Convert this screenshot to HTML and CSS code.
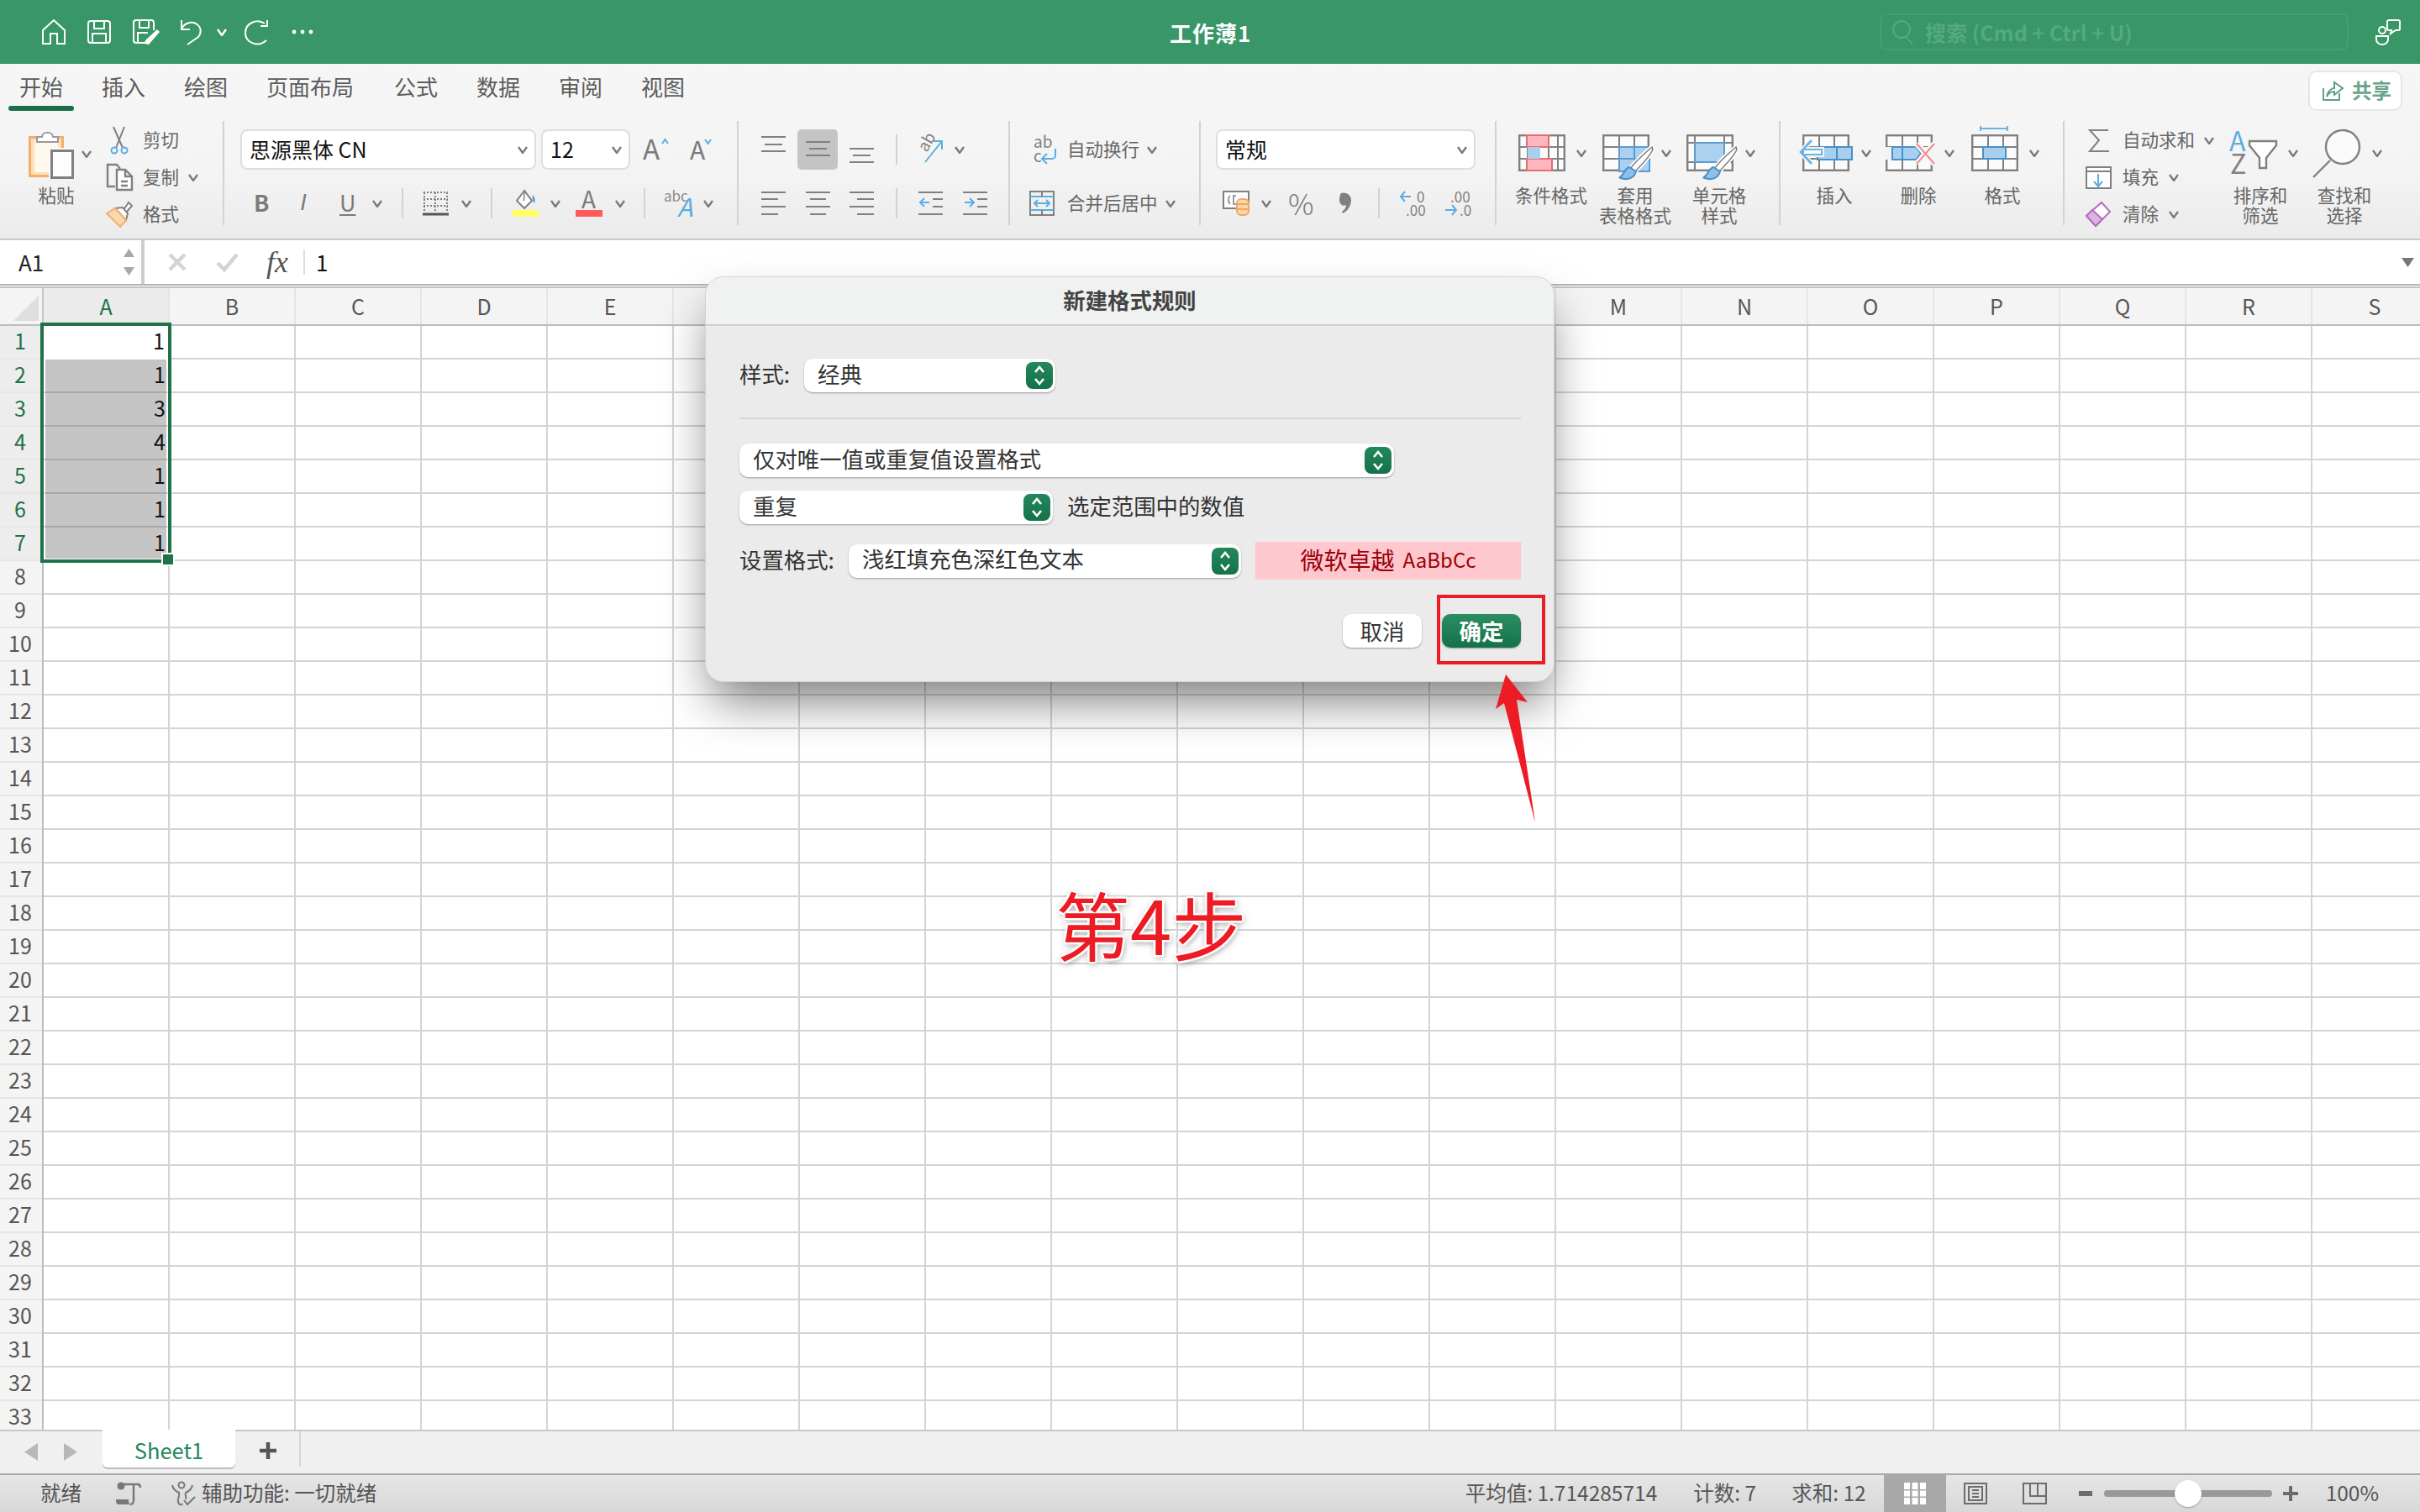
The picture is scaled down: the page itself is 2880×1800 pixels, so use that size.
FILE: index.html
```html
<!DOCTYPE html>
<html lang="zh-CN">
<head>
<meta charset="utf-8">
<title>工作薄1</title>
<link rel="stylesheet" href="styles.css">
</head>
<body>
<svg class="sprite" xmlns="http://www.w3.org/2000/svg">
  <symbol id="chev" viewBox="0 0 12 9"><polyline points="1,1 6,8 11,1" fill="none" stroke="currentColor" stroke-width="2.4"/></symbol>
  <symbol id="grid" viewBox="0 0 56 44"><rect x="1.2" y="1.2" width="53.6" height="41.6" fill="#fbfbfb" stroke="#808080" stroke-width="2.4"/><path d="M20 1V43M38 1V43M1 15H55M1 29H55" stroke="#808080" stroke-width="2" fill="none"/></symbol>
  <symbol id="step" viewBox="0 0 32 32"><path d="M11 12 16 6l5 6M11 20l5 6 5-6" fill="none" stroke="#fff" stroke-width="2.6"/></symbol>
  <symbol id="brush" viewBox="0 0 62 55"><path d="M59 15C52 21 38 34 33 41l5 4c6-6 18-18 22-27Z" fill="#fff" stroke="#fff" stroke-width="5"/><path d="M59 15C52 21 38 34 33 41l5 4c6-6 18-18 22-27Z" fill="#fff" stroke="#808080" stroke-width="1.600"/><path d="M32 39c-6 2-6 8-10 11-2 1-2 2 0 2 8 3 16 0 18-8Z" fill="#8cc0e8" stroke="#4a90c8" stroke-width="2"/></symbol>
</svg>

<header class="titlebar">
  <svg class="ic-home" viewBox="0 0 28 30"><path d="M1 13 14 1l13 12v16h-9V17h-8v12H1Z" fill="none" stroke="#fff" stroke-width="2"/></svg>
  <svg class="ic-save" viewBox="0 0 28 28"><path d="M4 1h20a3 3 0 0 1 3 3v20a3 3 0 0 1-3 3H4a3 3 0 0 1-3-3V4a3 3 0 0 1 3-3ZM8 1v9h12V1M6 27V16h16v11" fill="none" stroke="#fff" stroke-width="2"/></svg>
  <svg class="ic-saveas" viewBox="0 0 32 30"><path d="M18 28H4a3 3 0 0 1-3-3V4a3 3 0 0 1 3-3h18a3 3 0 0 1 3 3v9M8 1v9h11V1M6 28V16h12" fill="none" stroke="#fff" stroke-width="2"/><path d="M29 12 32 15 19 30 14 29 15 25Z" fill="#fff"/></svg>
  <svg class="ic-undo" viewBox="0 0 26 31"><path d="M2 1v11h10M2 12C4 5 13 2 19 5c7 4 7 11 3 16L9 30" fill="none" stroke="#fff" stroke-width="2"/></svg>
  <svg class="chev chev-t"><use href="#chev"/></svg>
  <svg class="ic-redo" viewBox="0 0 33 31"><path d="M25 5C16-1 2 4 2 16c0 12 15 18 25 9M20 8h8V1" fill="none" stroke="#fff" stroke-width="2"/></svg>
  <svg class="ic-more" viewBox="0 0 26 6"><circle cx="3" cy="3" r="2.400" fill="#fff"/><circle cx="13" cy="3" r="2.400" fill="#fff"/><circle cx="23" cy="3" r="2.400" fill="#fff"/></svg>
  <div class="doc-title">工作薄1</div>
  <div class="search">
    <svg class="ic-search" viewBox="0 0 26 30"><circle cx="12" cy="12" r="10" fill="none" stroke="currentColor" stroke-width="2"/><path d="M18 21l7 9" stroke="currentColor" stroke-width="2"/></svg>
    <span>搜索 (Cmd + Ctrl + U)</span>
  </div>
  <svg class="ic-person" viewBox="0 0 31 31"><circle cx="9" cy="13" r="4" fill="none" stroke="#fff" stroke-width="2"/><path d="M2 20h14v4a7 6 0 0 1-14 0Z" fill="none" stroke="#fff" stroke-width="2"/><path d="M17 1h11a2 2 0 0 1 2 2v8a2 2 0 0 1-2 2h-3l-6 4 1-4h-3a2 2 0 0 1-2-2V3a2 2 0 0 1 2-2Z" fill="none" stroke="#fff" stroke-width="2"/></svg>
</header>

<section class="ribbon">
  <nav class="tabs">
    <span class="tab active">开始</span>
    <span class="tab">插入</span>
    <span class="tab">绘图</span>
    <span class="tab">页面布局</span>
    <span class="tab ml2">公式</span>
    <span class="tab">数据</span>
    <span class="tab">审阅</span>
    <span class="tab">视图</span>
    <button class="share">
      <svg class="ic-share" viewBox="0 0 24 24"><path d="M1 9v14h19v-8" fill="none" stroke="#5f9f82" stroke-width="2"/><path d="M5 19c1-7 6-10 9-10V2l10 7-10 8v-4c-4 0-7 2-9 6Z" fill="none" stroke="#5f9f82" stroke-width="2"/></svg>
      <span>共享</span>
    </button>
  </nav>
  <div class="groups">
    <div class="group g1">
      <div class="paste">
        <div class="paste-top">
          <svg class="ic-paste" viewBox="0 0 54 59"><rect x="1.500" y="9.500" width="39" height="46" fill="#fde0b8" stroke="#f4ae6c" stroke-width="3"/><rect x="7" y="14" width="28" height="37" fill="#fff8ec"/><path d="M10 15V9h6c0-7 13-7 13 0h6v6Z" fill="#fff" stroke="#9a9a9a" stroke-width="2"/><rect x="24" y="22" width="30" height="37" fill="#fbfbfb"/><rect x="27.500" y="25.500" width="25" height="32" fill="#fdfdfd" stroke="#808080" stroke-width="3"/></svg>
          <svg class="chev ml9"><use href="#chev"/></svg>
        </div>
        <div class="paste-label">粘贴</div>
      </div>
      <div class="list ml17">
        <div class="list-row">
          <span class="list-ic"><svg class="ic-cut" viewBox="0 0 27 32"><path d="M9 0l11 25M22 0 12 25" stroke="#808080" stroke-width="2" fill="none"/><circle cx="10" cy="28" r="3.500" fill="none" stroke="#5aaee0" stroke-width="2"/><circle cx="22" cy="28" r="3.500" fill="none" stroke="#5aaee0" stroke-width="2"/></svg></span>
          <span>剪切</span>
        </div>
        <div class="list-row">
          <span class="list-ic"><svg class="ic-copy" viewBox="0 0 32 32"><path d="M11 27H2V1h11l4 5" fill="none" stroke="#808080" stroke-width="2.400"/><path d="M13 7h10l8 8v16H13ZM23 7v8h8M18 21h8M18 26h8" fill="#fff" stroke="#808080" stroke-width="2.400"/></svg></span>
          <span>复制</span>
          <svg class="chev ml11"><use href="#chev"/></svg>
        </div>
        <div class="list-row">
          <span class="list-ic"><svg class="ic-fmt" viewBox="0 0 32 30"><path d="M21 10 27 1l4 4-7 8" fill="#fff" stroke="#808080" stroke-width="2"/><path d="M11 8 20 7l6 7-2 8Z" fill="#fff" stroke="#808080" stroke-width="2"/><path d="M1 14 11 8l13 14-7 8Z" fill="#fbd7ae" stroke="#f4ae6c" stroke-width="2"/></svg></span>
          <span>格式</span>
        </div>
      </div>
    </div>

    <div class="group g2">
      <div class="r1">
        <div class="field w352"><span>思源黑体 CN</span><svg class="chev"><use href="#chev"/></svg></div>
        <div class="field w106 ml6"><span>12</span><svg class="chev"><use href="#chev"/></svg></div>
        <svg class="ic-grow ml15" viewBox="0 0 31 30"><text x="0" y="27" class="t-a">A</text><path d="M23 8l3.500-5L30 8" fill="none" stroke="#5aaee0" stroke-width="2"/></svg>
        <svg class="ic-shrink ml25" viewBox="0 0 27 30"><text x="0" y="27" class="t-a2">A</text><path d="M18 3l3.500 5L25 3" fill="none" stroke="#5aaee0" stroke-width="2"/></svg>
      </div>
      <div class="r2">
        <span class="fb b ml16">B</span>
        <span class="fb i ml35">I</span>
        <span class="fb u ml35">U</span>
        <svg class="chev ml22"><use href="#chev"/></svg>
        <i class="sep ml23"></i>
        <svg class="ic-border ml23" viewBox="0 0 31 30"><path d="M1 2h29M1 10h29M1 18h29M2 2v22M15 2v22M29 2v22" stroke="#808080" stroke-width="2" stroke-dasharray="2 2" fill="none"/><path d="M0 28h31" stroke="#555" stroke-width="3"/></svg>
        <svg class="chev ml15"><use href="#chev"/></svg>
        <i class="sep ml23"></i>
        <svg class="ic-fill ml24" viewBox="0 0 31 32"><path d="M14 1 5 13l9 9 9-9Z" fill="#fff" stroke="#808080" stroke-width="2"/><path d="M14 2c0 5 0 9-1 11" stroke="#808080" stroke-width="1.500" fill="none"/><path d="M24 6c3 3 3 7 2 10-2-2-3-6-2-10Z" fill="#4f9ed2"/><rect y="24" width="31" height="8" fill="#ffff66"/></svg>
        <svg class="chev ml14"><use href="#chev"/></svg>
        <svg class="ic-color ml18" viewBox="0 0 32 32"><text x="7" y="22" class="t-color">A</text><rect y="24" width="32" height="8" fill="#ff5a5a"/></svg>
        <svg class="chev ml15"><use href="#chev"/></svg>
        <i class="sep ml22"></i>
        <svg class="ic-phon ml22" viewBox="0 0 35 32"><text x="0" y="14" class="t-abc">abc</text><text x="16" y="32" class="t-ablue">A</text></svg>
        <svg class="chev ml12"><use href="#chev"/></svg>
      </div>
    </div>

    <div class="group g3">
      <div class="r1">
        <svg class="ic-al" viewBox="0 0 29 48"><path d="M0 9h29M4 18h21M0 26h29" stroke="#808080" stroke-width="2.200"/></svg>
        <span class="al-on ml14"><svg class="ic-al" viewBox="0 0 29 48"><path d="M0 15h29M4 23h21M0 31h29" stroke="#808080" stroke-width="2.200"/></svg></span>
        <svg class="ic-al ml14" viewBox="0 0 29 48"><path d="M0 23h29M4 31h21M0 39h29" stroke="#808080" stroke-width="2.200"/></svg>
        <i class="sep ml26"></i>
        <svg class="ic-orient ml23" viewBox="0 0 32 30"><text transform="translate(12 19) rotate(-60)" class="t-ab">ab</text><path d="M10 30 30 5M20 5h10v10" fill="none" stroke="#5aaee0" stroke-width="2"/></svg>
        <svg class="chev ml13"><use href="#chev"/></svg>
      </div>
      <div class="r2">
        <svg class="ic-hal" viewBox="0 0 29 36"><path d="M0 5h29M0 13h20M0 22h29M0 31h20" stroke="#808080" stroke-width="2.200"/></svg>
        <svg class="ic-hal ml24" viewBox="0 0 29 36"><path d="M0 5h29M5 13h19M0 22h29M5 31h19" stroke="#808080" stroke-width="2.200"/></svg>
        <svg class="ic-hal ml23" viewBox="0 0 29 36"><path d="M0 5h29M9 13h20M0 22h29M9 31h20" stroke="#808080" stroke-width="2.200"/></svg>
        <i class="sep ml26"></i>
        <svg class="ic-hal ml25" viewBox="0 0 29 36"><path d="M0 5h29M17 13h12M17 22h12M0 31h29" stroke="#808080" stroke-width="2.200" fill="none"/><path d="M13 17H2M7 12l-5 5 5 5" stroke="#5aaee0" stroke-width="2" fill="none"/></svg>
        <svg class="ic-hal ml24" viewBox="0 0 29 36"><path d="M0 5h29M17 13h12M17 22h12M0 31h29" stroke="#808080" stroke-width="2.200" fill="none"/><path d="M2 17h11M8 12l5 5-5 5" stroke="#5aaee0" stroke-width="2" fill="none"/></svg>
      </div>
    </div>

    <div class="group g4">
      <div class="r1">
        <svg class="ic-wrap ml5" viewBox="0 0 27 30"><text x="0" y="13" class="t-ab2">ab</text><text x="0" y="30" class="t-ab2">c</text><path d="M26 14v8a4 4 0 0 1-4 4H11M16 20l-6 6 6 6" fill="none" stroke="#5aaee0" stroke-width="2"/></svg>
        <span class="ml13">自动换行</span>
        <svg class="chev ml9"><use href="#chev"/></svg>
      </div>
      <div class="r2">
        <svg class="ic-merge" viewBox="0 0 30 30"><rect x="1" y="1" width="28" height="28" fill="none" stroke="#808080" stroke-width="2"/><path d="M1 7h28M1 23h28" stroke="#5aaee0" stroke-width="2"/><path d="M15 1v6M15 23v6" stroke="#808080" stroke-width="2"/><path d="M6 15h18M10 11l-4 4 4 4M20 11l4 4-4 4" fill="none" stroke="#5aaee0" stroke-width="2"/></svg>
        <span class="ml15">合并后居中</span>
        <svg class="chev ml9"><use href="#chev"/></svg>
      </div>
    </div>

    <div class="group g5">
      <div class="r1">
        <div class="field w309"><span>常规</span><svg class="chev"><use href="#chev"/></svg></div>
      </div>
      <div class="r2">
        <svg class="ic-acc ml8" viewBox="0 0 32 30"><rect x="1" y="1" width="30" height="20" fill="#fff" stroke="#808080" stroke-width="2"/><path d="M9 6c-3 3-3 7 0 10M16 6h-3v10h3" fill="none" stroke="#808080" stroke-width="1.600"/><rect x="17" y="10" width="14" height="19" rx="5" fill="#fbd7ae" stroke="#f2a55d" stroke-width="2"/><path d="M17 16h14M17 22h14" stroke="#f2a55d" stroke-width="2"/></svg>
        <svg class="chev ml14"><use href="#chev"/></svg>
        <span class="pct ml20">%</span>
        <svg class="ic-comma ml32" viewBox="0 0 15 26"><path d="M3 1C9-1 15 3 15 9c0 7-4 13-10 16l-1-2c3-2 5-5 5-8-3 2-8 0-8-6 0-3 1-7 2-8Z" fill="#808080"/></svg>
        <i class="sep ml32"></i>
        <svg class="ic-dec ml23" viewBox="0 0 31 32"><path d="M14 8H2M7 2 2 8l5 6" fill="none" stroke="#5aaee0" stroke-width="2"/><text x="21" y="15" class="t-dec">0</text><text x="8" y="31" class="t-dec">.00</text></svg>
        <svg class="ic-dec ml22" viewBox="0 0 31 32"><text x="8" y="15" class="t-dec">.00</text><path d="M2 24h13M10 18l5 6-5 6" fill="none" stroke="#5aaee0" stroke-width="2"/><text x="19" y="31" class="t-dec">.0</text></svg>
      </div>
    </div>

    <div class="group g6">
      <div class="tool">
        <div class="tool-top pad11">
          <svg class="ic-grid" viewBox="0 0 56 44"><rect x="1.200" y="1.200" width="53.600" height="41.600" fill="#fbfbfb" stroke="#808080" stroke-width="2.400"/><path d="M11 1V43M36 1V43M47 1V43M1 15H55M1 29H55" stroke="#808080" stroke-width="2" fill="none"/><rect x="10" y="1" width="26" height="14" fill="#ffb6bf" stroke="#e56d6d" stroke-width="2"/><rect x="10" y="29" width="30" height="14" fill="#ffb6bf" stroke="#e56d6d" stroke-width="2"/><rect x="11" y="15" width="15" height="14" fill="#a8d0ee"/></svg>
          <svg class="chev ch-tool ml13"><use href="#chev"/></svg>
        </div>
        <div class="tool-label">条件格式</div>
      </div>
      <div class="tool">
        <div class="tool-top pad11">
          <svg class="ic-gridb" viewBox="0 0 57 53"><use href="#grid" width="56" height="44"/><rect x="20" y="15" width="36" height="29" fill="#abd1ef" stroke="#5b9bd5" stroke-width="2"/><path d="M38 15v29M20 29h36" stroke="#5b9bd5" stroke-width="2"/><use href="#brush" width="62" height="55"/></svg>
          <svg class="chev ch-tool ml13"><use href="#chev"/></svg>
        </div>
        <div class="tool-label">套用<br>表格格式</div>
      </div>
      <div class="tool">
        <div class="tool-top pad11">
          <svg class="ic-gridb" viewBox="0 0 57 53"><rect x="1.200" y="1.200" width="53.600" height="41.600" fill="#fbfbfb" stroke="#808080" stroke-width="2.400"/><path d="M10 1V43M1 10H55M1 33H55M45 1V43" stroke="#808080" stroke-width="2" fill="none"/><rect x="10" y="10" width="35" height="23" fill="#abd1ef" stroke="#5b9bd5" stroke-width="2"/><use href="#brush" width="62" height="55"/></svg>
          <svg class="chev ch-tool ml13"><use href="#chev"/></svg>
        </div>
        <div class="tool-label">单元格<br>样式</div>
      </div>
    </div>

    <div class="group g7">
      <div class="tool">
        <div class="tool-top pad8">
          <svg class="ic-ins" viewBox="0 0 64 44"><use href="#grid" x="4" width="56" height="44"/><rect x="22" y="15" width="41" height="15" fill="#a8d0ee" stroke="#4a90c8" stroke-width="2"/><path d="M45 15v15" stroke="#4a90c8" stroke-width="2"/><path d="M15 7 2 21l13 14M5 18h22v6H5Z" fill="none" stroke="#f4f4f4" stroke-width="6"/><rect x="5" y="18" width="22" height="6" fill="#fff" stroke="#6ab3e2" stroke-width="2"/><path d="M15 7 2 21l13 14" fill="none" stroke="#6ab3e2" stroke-width="2.600"/></svg>
          <svg class="chev ch-tool ml10"><use href="#chev"/></svg>
        </div>
        <div class="tool-label">插入</div>
      </div>
      <div class="tool">
        <div class="tool-top pad11">
          <svg class="ic-del" viewBox="0 0 60 44"><use href="#grid" width="56" height="44"/><path d="M0 15h8v15H0ZM42 15h14v15H42Z" fill="#f3f3f3"/><path d="M8 15h28l6 7.500-6 7.500H8ZM20 15v15" fill="#a8d0ee" stroke="#4a90c8" stroke-width="2"/><path d="M37 11l21 24M58 11 37 35" stroke="#f6f6f6" stroke-width="7"/><path d="M37 11l21 24M58 11 37 35" stroke="#f08a8a" stroke-width="2"/></svg>
          <svg class="chev ch-tool ml10"><use href="#chev"/></svg>
        </div>
        <div class="tool-label">删除</div>
      </div>
      <div class="tool">
        <div class="tool-top pad13">
          <svg class="ic-fmtc" viewBox="0 0 56 54"><path d="M11 3h32M11 0v6M43 0v6" stroke="#6ab3e2" stroke-width="2" fill="none"/><use href="#grid" y="10" width="56" height="44"/><rect x="14" y="25" width="27" height="14" fill="#a8d0ee" stroke="#4a90c8" stroke-width="2"/></svg>
          <svg class="chev ch-tool ml13"><use href="#chev"/></svg>
        </div>
        <div class="tool-label">格式</div>
      </div>
    </div>

    <div class="group g8">
      <div class="list list-edit">
        <div class="list-row">
          <span class="list-ic"><svg class="ic-sum" viewBox="0 0 25 27"><path d="M24 1H2l11 12L2 26h23" fill="none" stroke="#808080" stroke-width="2"/></svg></span>
          <span>自动求和</span>
          <svg class="chev ml11"><use href="#chev"/></svg>
        </div>
        <div class="list-row">
          <span class="list-ic"><svg class="ic-dn" viewBox="0 0 31 27"><rect x="1" y="1" width="29" height="25" fill="#fff" stroke="#808080" stroke-width="2"/><path d="M1 6h29" stroke="#808080" stroke-width="2"/><path d="M15 9v14M10 18l5 6 5-6" fill="none" stroke="#5aaee0" stroke-width="2"/></svg></span>
          <span>填充</span>
          <svg class="chev ml12"><use href="#chev"/></svg>
        </div>
        <div class="list-row">
          <span class="list-ic"><svg class="ic-clear" viewBox="0 0 30 30"><path d="M19 1 29 12 12 29 1 17Z" fill="#fff" stroke="#b56cc4" stroke-width="2"/><path d="M8 10 20 21 12 29 1 17Z" fill="#dcb3e3" stroke="#b56cc4" stroke-width="2"/></svg></span>
          <span>清除</span>
          <svg class="chev ml12"><use href="#chev"/></svg>
        </div>
      </div>
      <div class="tool">
        <div class="tool-top pad14">
          <svg class="ic-sort" viewBox="0 0 56 52"><text x="-1" y="24" class="t-sa">A</text><text x="0" y="51" class="t-sz">Z</text><path d="M23 12h32v5L43 32v12h-8V32L23 17Z" fill="#fff" stroke="#808080" stroke-width="2.400"/></svg>
          <svg class="chev ch-tool ml13"><use href="#chev"/></svg>
        </div>
        <div class="tool-label">排序和<br>筛选</div>
      </div>
      <div class="tool">
        <div class="tool-top pad12">
          <svg class="ic-find" viewBox="0 0 57 58"><circle cx="36" cy="21" r="20" fill="#fbfbfb" stroke="#808080" stroke-width="2.400"/><path d="M21 37 1 57" stroke="#808080" stroke-width="2.400"/></svg>
          <svg class="chev ch-tool ml14"><use href="#chev"/></svg>
        </div>
        <div class="tool-label">查找和<br>选择</div>
      </div>
    </div>
  </div>
</section>

<section class="formula">
  <div class="namebox">
    <span>A1</span>
    <svg class="ic-spin" viewBox="0 0 13 32"><path d="M6.500 0 13 10H0ZM6.500 32 0 22h13Z" fill="#a8a8a8"/></svg>
  </div>
  <svg class="ic-x" viewBox="0 0 22 22"><path d="M2 2l18 18M20 2 2 20" stroke="#d4d4d4" stroke-width="4.500"/></svg>
  <svg class="ic-ok" viewBox="0 0 26 22"><path d="M2 12l8 8L25 2" fill="none" stroke="#d4d4d4" stroke-width="4.500"/></svg>
  <span class="fx"><i>f</i><i>x</i></span>
  <i class="fsep"></i>
  <span class="fval">1</span>
  <svg class="ic-fdown" viewBox="0 0 15 11"><path d="M0 0h15L7.500 11Z" fill="#777"/></svg>
</section>

<main class="sheet">
  <div class="colheads">
    <div class="corner"><svg class="ic-corner" viewBox="0 0 30 30"><path d="M30 0V30H0Z" fill="#dedede"/></svg></div>
    <span class="ch on">A</span><span class="ch">B</span><span class="ch">C</span><span class="ch">D</span><span class="ch">E</span><span class="ch"></span><span class="ch"></span><span class="ch"></span><span class="ch"></span><span class="ch"></span><span class="ch"></span><span class="ch"></span><span class="ch">M</span><span class="ch">N</span><span class="ch">O</span><span class="ch">P</span><span class="ch">Q</span><span class="ch">R</span><span class="ch">S</span>
  </div>
  <div class="sheet-body">
    <div class="rowheads">
      <span class="rh on">1</span><span class="rh on">2</span><span class="rh on">3</span><span class="rh on">4</span><span class="rh on">5</span><span class="rh on">6</span><span class="rh on">7</span><span class="rh">8</span><span class="rh">9</span><span class="rh">10</span><span class="rh">11</span><span class="rh">12</span><span class="rh">13</span><span class="rh">14</span><span class="rh">15</span><span class="rh">16</span><span class="rh">17</span><span class="rh">18</span><span class="rh">19</span><span class="rh">20</span><span class="rh">21</span><span class="rh">22</span><span class="rh">23</span><span class="rh">24</span><span class="rh">25</span><span class="rh">26</span><span class="rh">27</span><span class="rh">28</span><span class="rh">29</span><span class="rh">30</span><span class="rh">31</span><span class="rh">32</span><span class="rh">33</span>
    </div>
    <div class="cells">
      <div class="col-a">
        <div class="cell">1</div>
        <div class="cell dup">1</div>
        <div class="cell dup">3</div>
        <div class="cell dup">4</div>
        <div class="cell dup">1</div>
        <div class="cell dup">1</div>
        <div class="cell dup last">1</div>
      </div>
    </div>
  </div>
  <div class="selection"><i class="handle"></i></div>
</main>

<section class="tabstrip">
  <svg class="ic-tri" viewBox="0 0 16 21"><path d="M16 0V21L0 10.500Z" fill="#b8b8b8"/></svg>
  <svg class="ic-tri ml31" viewBox="0 0 16 21"><path d="M0 0V21L16 10.500Z" fill="#b8b8b8"/></svg>
  <div class="sheet-tab">Sheet1</div>
  <svg class="ic-plus" viewBox="0 0 20 20"><path d="M10 0v20M0 10h20" stroke="#555" stroke-width="4.500"/></svg>
  <i class="tsep"></i>
</section>

<footer class="status">
  <span class="pl48">就绪</span>
  <svg class="ic-macro ml41" viewBox="0 0 32 28"><circle cx="6" cy="5" r="4.500" fill="#777"/><path d="M6 3h20c2 0 3 2 3 4M21 3v19c0 3-2 5-4 5" fill="none" stroke="#777" stroke-width="2.400"/><path d="M0 21h15v2c0 2 1 3 2 4H3c-2 0-3-2-3-4Z" fill="#777"/></svg>
  <svg class="ic-access ml33" viewBox="0 0 30 30"><circle cx="13" cy="5" r="3.500" fill="none" stroke="#777" stroke-width="2"/><path d="M2 5c1 6 6 8 8 9 1 5-2 7-1 11 1 4 4 4 5 2M26 5c-1 6-6 8-8 9-1 3 1 5 0 8M16 23l4 5 9-9" fill="none" stroke="#777" stroke-width="2"/></svg>
  <span class="ml7">辅助功能: 一切就绪</span>
  <span class="stat-first">平均值: 1.714285714</span>
  <span class="ml43">计数: 7</span>
  <span class="ml42">求和: 12</span>
  <div class="view-on ml21"><svg class="ic-view" viewBox="0 0 26 26"><path d="M0 0h7v8H0ZM9.500 0h7v8h-7ZM19 0h7v8h-7ZM0 9.500h7v7H0ZM9.500 9.500h7v7h-7ZM19 9.500h7v7h-7ZM0 18h7v8H0ZM9.500 18h7v8h-7ZM19 18h7v8h-7Z" fill="#fff"/></svg></div>
  <svg class="ic-layout ml21" viewBox="0 0 28 26"><rect x="1" y="1" width="26" height="24" fill="none" stroke="#6d6d6d" stroke-width="2"/><rect x="6" y="5" width="16" height="16" fill="none" stroke="#6d6d6d" stroke-width="2"/><path d="M10 9h8M10 13h8M10 17h8" stroke="#6d6d6d" stroke-width="2"/></svg>
  <svg class="ic-break ml42" viewBox="0 0 29 26"><rect x="1" y="1" width="27" height="24" fill="none" stroke="#6d6d6d" stroke-width="2"/><path d="M9 1v15h19M18 1v15" fill="none" stroke="#6d6d6d" stroke-width="2"/></svg>
  <i class="zoom-minus ml38"></i>
  <div class="slider ml14"><i class="thumb"></i></div>
  <svg class="ic-zplus ml13" viewBox="0 0 18 18"><path d="M9 0v18M0 9h18" stroke="#6d6d6d" stroke-width="4"/></svg>
  <span class="ml33">100%</span>
</footer>

<div class="dialog">
  <div class="dialog-title">新建格式规则</div>
  <div class="dialog-body">
    <div class="d-row">
      <span class="lbl w77">样式:</span>
      <div class="select w299"><span class="opt">经典</span><span class="stepper"><svg class="step"><use href="#step"/></svg></span></div>
    </div>
    <hr class="d-rule">
    <div class="d-row">
      <div class="select w779"><span class="opt">仅对唯一值或重复值设置格式</span><span class="stepper"><svg class="step"><use href="#step"/></svg></span></div>
    </div>
    <div class="d-row mt16">
      <div class="select w373"><span class="opt">重复</span><span class="stepper"><svg class="step"><use href="#step"/></svg></span></div>
      <span class="lbl ml17">选定范围中的数值</span>
    </div>
    <div class="d-row d-row-tall mt21">
      <span class="lbl w130">设置格式:</span>
      <div class="select w467"><span class="opt">浅红填充色深红色文本</span><span class="stepper"><svg class="step"><use href="#step"/></svg></span></div>
      <div class="preview"><span class="pv-zh">微软卓越</span><span class="pv-en">AaBbCc</span></div>
    </div>
    <div class="d-actions">
      <button class="btn">取消</button>
      <button class="btn primary">确定</button>
    </div>
  </div>
</div>

<div class="callout-box"></div>
<svg class="callout-arrow" viewBox="0 0 55 180"><polygon points="17,3 43,36 30,33 52,179 15,37 5,44" fill="#ed1c24"/></svg>
<div class="callout-text">第4步</div>
</body>
</html>
```

FILE: styles.css
```css
* { box-sizing: border-box; }
html, body { margin: 0; padding: 0; }
body {
  width: 2880px;
  height: 1800px;
  overflow: hidden;
  position: relative;
  display: flex;
  flex-direction: column;
  background: #fff;
  font-family: "Noto Sans CJK SC", "Noto Sans", sans-serif;
  font-size: 26px;
  color: #333;
}
i { font-style: normal; display: block; }
svg { display: block; flex: none; overflow: visible; }
.sprite { display: none; }

.ml2 { margin-left: 2px; } .ml5 { margin-left: 5px; } .ml6 { margin-left: 6px; } .ml7 { margin-left: 7px; }
.ml8 { margin-left: 8px; } .ml9 { margin-left: 9px; } .ml10 { margin-left: 10px; } .ml11 { margin-left: 11px; }
.ml12 { margin-left: 12px; } .ml13 { margin-left: 13px; } .ml14 { margin-left: 14px; } .ml15 { margin-left: 15px; }
.ml16 { margin-left: 16px; } .ml17 { margin-left: 17px; } .ml18 { margin-left: 18px; } .ml20 { margin-left: 20px; }
.ml21 { margin-left: 21px; } .ml22 { margin-left: 22px; } .ml23 { margin-left: 23px; } .ml24 { margin-left: 24px; }
.ml25 { margin-left: 25px; } .ml26 { margin-left: 26px; } .ml31 { margin-left: 31px; } .ml32 { margin-left: 32px; }
.ml33 { margin-left: 33px; } .ml35 { margin-left: 35px; } .ml38 { margin-left: 38px; } .ml41 { margin-left: 41px; }
.ml42 { margin-left: 42px; } .ml43 { margin-left: 43px; }
.mt16 { margin-top: 16px; } .mt21 { margin-top: 21px; }
.pad8 { padding-left: 8px; } .pad11 { padding-left: 11px; } .pad12 { padding-left: 12px; } .pad13 { padding-left: 13px; } .pad14 { padding-left: 14px; }

.chev { width: 12px; height: 9px; color: #7a7a7a; }

/* title bar */
.titlebar {
  height: 76px;
  flex: none;
  display: flex;
  align-items: center;
  padding-left: 50px;
  padding-right: 23px;
  background: #389667;
  color: #fff;
}
.ic-home { width: 28px; height: 30px; }
.ic-save { width: 28px; height: 28px; margin-left: 26px; }
.ic-saveas { width: 32px; height: 30px; margin-left: 26px; }
.ic-undo { width: 26px; height: 31px; margin-left: 24px; }
.chev-t { color: #fff; margin-left: 18px; }
.ic-redo { width: 33px; height: 31px; margin-left: 20px; }
.ic-more { width: 26px; height: 6px; margin-left: 24px; }
.doc-title { margin-left: 1019px; font-weight: 700; font-size: 26px; letter-spacing: 1px; }
.search {
  margin-left: auto;
  width: 558px;
  height: 44px;
  border: 2px solid #419f72;
  border-radius: 8px;
  display: flex;
  align-items: center;
  padding-left: 12px;
  color: #54a982;
  font-weight: 700;
  font-size: 25px;
}
.ic-search { width: 26px; height: 30px; margin-right: 14px; }
.ic-person { width: 31px; height: 31px; margin-left: 31px; }

/* ribbon */
.ribbon {
  height: 210px;
  flex: none;
  background: linear-gradient(#f6f6f6, #f4f4f4 60%, #ebebeb);
  border-bottom: 2px solid #c8c8c8;
  color: #666;
  font-size: 21.500px;
}
.tabs {
  height: 68px;
  display: flex;
  gap: 46px;
  padding: 8px 21px 0 23px;
  font-size: 26px;
  color: #5c5c5c;
}
.tab { position: relative; height: 34px; line-height: 30px; margin-top: 4px; }
.tab.ml2 { margin-left: 2px; }
.tab.active::after {
  content: "";
  position: absolute;
  left: -13px;
  right: -13px;
  top: 38px;
  height: 6px;
  border-radius: 3px;
  background: #1d6f4a;
}
.share {
  margin-left: auto;
  width: 112px;
  height: 48px;
  display: flex;
  align-items: center;
  padding: 0 0 0 15px;
  background: #fff;
  border: 2px solid #e6e6e6;
  border-radius: 10px;
  font-family: inherit;
  font-size: 23.500px;
  font-weight: 700;
  color: #6aa58a;
}
.share span { padding-bottom: 3px; }
.ic-share { width: 24px; height: 24px; margin-right: 11px; }

.groups { display: flex; height: 124px; }
.group { height: 124px; border-right: 2px solid #d2d2d2; flex: none; }
.g1 { width: 267px; padding-left: 34px; display: flex; }
.g2 { width: 612px; padding-left: 19px; }
.g3 { width: 323px; padding-left: 27px; }
.g4 { width: 227px; padding-left: 23px; }
.g5 { width: 352px; padding-left: 18px; }
.g6 { width: 338px; padding-left: 15px; display: flex; }
.g7 { width: 338px; padding-left: 14px; display: flex; }
.g8 { flex: 1; border-right: 0; padding-left: 25px; display: flex; }

.paste { width: 75px; padding-top: 10px; }
.paste-top { display: flex; align-items: center; height: 59px; }
.ic-paste { width: 54px; height: 59px; }
.paste-label { width: 66px; text-align: center; margin-top: 3px; line-height: 32px; }
.list-row { display: flex; align-items: center; height: 44px; }
.list-row span:not(.list-ic) { padding-bottom: 3px; }
.list { padding-top: 1px; }
.list-ic { width: 44px; display: flex; }
.list-edit { width: 158px; }
.ic-cut { width: 27px; height: 32px; }
.ic-copy { width: 32px; height: 32px; }
.ic-fmt { width: 32px; height: 30px; }

.r1 { display: flex; align-items: center; height: 48px; margin-top: 10px; }
.r2 { display: flex; align-items: center; height: 36px; margin-top: 22px; }
.g4 span { padding-bottom: 3px; }
.sep { width: 2px; height: 36px; background: #d2d2d2; }
.field {
  height: 48px;
  display: flex;
  align-items: center;
  justify-content: space-between;
  padding: 0 8px 0 9px;
  background: #fff;
  border: 2px solid #dedede;
  border-radius: 8px;
  color: #111;
  font-size: 25px;
}
.field span { padding-bottom: 3px; }
.w352 { width: 352px; }
.w106 { width: 106px; }
.w309 { width: 309px; }
.ic-grow { width: 31px; height: 30px; }
.ic-shrink { width: 27px; height: 30px; }
.t-a, .t-a2 { font-size: 33px; fill: #7a7a7a; }
.t-a2 { font-size: 30px; }
.fb { width: 16px; text-align: center; font-size: 27px; color: #7a7a7a; line-height: 32px; padding-bottom: 3px; }
.fb.b { font-weight: 700; }
.fb.i { font-style: italic; font-family: "Liberation Sans", sans-serif; }
.fb.u { width: 17px; text-decoration: underline; text-underline-offset: 3px; }
.ic-border { width: 31px; height: 30px; }
.ic-fill { width: 31px; height: 32px; }
.ic-color { width: 32px; height: 32px; }
.t-color { font-size: 28px; fill: #7a7a7a; }
.ic-phon { width: 35px; height: 32px; }
.t-abc { font-size: 17px; fill: #8a8a8a; }
.t-ablue { font-size: 30px; font-style: italic; fill: #5aaee0; }

.ic-al { width: 29px; height: 48px; }
.al-on { width: 48px; height: 48px; display: flex; justify-content: center; background: #c4c4c4; border-radius: 5px; }
.ic-hal { width: 29px; height: 36px; }
.ic-orient { width: 32px; height: 30px; }
.t-ab { font-size: 19px; fill: #808080; }
.ic-wrap { width: 27px; height: 30px; }
.t-ab2 { font-size: 19px; fill: #808080; }
.ic-merge { width: 30px; height: 30px; }
.ic-acc { width: 32px; height: 30px; }
.pct { width: 28px; font-size: 34px; line-height: 36px; color: #7a7a7a; text-align: center; font-weight: 300; }
.ic-comma { width: 15px; height: 26px; }
.ic-dec { width: 31px; height: 32px; }
.t-dec { font-size: 17px; fill: #808080; }

.tool { width: 100px; flex: none; }
.tool-top { height: 76px; display: flex; align-items: flex-start; padding-top: 16px; }
.ch-tool { margin-top: 18px; }
.tool-label { text-align: center; line-height: 24px; }
.ic-grid { width: 56px; height: 44px; }
.ic-gridb { width: 57px; height: 53px; }
.ic-ins { width: 64px; height: 44px; }
.ic-del { width: 60px; height: 44px; }
.ic-fmtc { width: 56px; height: 54px; margin-top: -10px; }
.ic-sum { width: 25px; height: 27px; margin-left: 3px; }
.ic-dn { width: 31px; height: 27px; }
.ic-clear { width: 30px; height: 30px; }
.ic-sort { width: 56px; height: 52px; margin-top: -4px; }
.t-sa { font-size: 32px; fill: #5aaee0; }
.t-sz { font-size: 32px; fill: #808080; }
.ic-find { width: 57px; height: 58px; margin-top: -6px; }

/* formula bar */
.formula {
  height: 54px;
  flex: none;
  display: flex;
  align-items: center;
  background: #fff;
  border-bottom: 2px solid #b4b4b4;
  position: relative;
}
.namebox {
  width: 172px;
  height: 52px;
  display: flex;
  align-items: center;
  justify-content: space-between;
  padding: 0 8px 0 22px;
  border-right: 4px solid #cdcdcd;
  font-size: 26px;
  color: #222;
}
.namebox span { padding-bottom: 2px; }
.ic-spin { width: 13px; height: 32px; }
.ic-x { width: 22px; height: 22px; margin-left: 28px; }
.ic-ok { width: 26px; height: 22px; margin-left: 35px; }
.fx {
  margin-left: 34px;
  width: 30px;
  font-family: "Liberation Serif", serif;
  font-size: 36px;
  line-height: 40px;
  color: #555;
  font-style: italic;
  display: flex;
}
.fx i { font-style: italic; }
.fsep { width: 2px; height: 30px; background: #dcdcdc; margin-left: 14px; }
.fval { margin-left: 13px; color: #111; font-size: 26px; padding-bottom: 2px; }
.ic-fdown { width: 15px; height: 11px; margin-left: auto; margin-right: 7px; }

/* sheet */
.sheet { flex: 1; min-height: 0; overflow: hidden; position: relative; }
.colheads {
  height: 47px;
  margin-top: 1px;
  display: flex;
  background: #f4f4f4;
  border-top: 2px solid #c4c4c4;
  border-bottom: 2px solid #bdbdbd;
}
.corner { width: 52px; flex: none; padding: 9px 0 0 16px; border-right: 2px solid #c4c4c4; }
.ic-corner { width: 30px; height: 30px; }
.ch {
  width: 150px;
  flex: none;
  text-align: center;
  border-right: 2px solid #e6e6e6;
  line-height: 42px;
  font-size: 25px;
  color: #555;
}
.ch.on { color: #1f7249; background: #ebebeb; }
.sheet-body { display: flex; height: 1314px; overflow: hidden; }
.rowheads { width: 52px; flex: none; background: #f4f4f4; border-right: 2px solid #bdbdbd; }
.rh {
  display: block;
  height: 40px;
  line-height: 35px;
  border-bottom: 2px solid #e6e6e6;
  text-align: center;
  padding-right: 2px;
  font-size: 25px;
  color: #555;
}
.rh.on { color: #1f7249; background: #ededed; }
.cells {
  flex: 1;
  background-image:
    linear-gradient(to right, transparent 148px, #d4d4d4 148px),
    linear-gradient(to bottom, transparent 38px, #d4d4d4 38px);
  background-size: 150px 40px;
}
.col-a { width: 148px; }
.cell {
  height: 40px;
  line-height: 35px;
  text-align: right;
  padding-right: 4px;
  font-size: 25px;
  color: #111;
  background: #fff;
  border-bottom: 2px solid #fff;
}
.cell.dup {
  margin-left: 2px;
  width: 144px;
  padding-right: 1px;
  background: #c5c5c5;
  border-bottom: 2px solid #a9a9a9;
}
.cell.last { height: 37px; border-bottom: 0; }
.selection {
  position: absolute;
  left: 48px;
  top: 44px;
  width: 156px;
  height: 286px;
  border: 4.500px solid #1f7249;
}
.handle {
  position: absolute;
  right: -6px;
  bottom: -6px;
  width: 12px;
  height: 12px;
  background: #1f7249;
  outline: 2px solid #fff;
}

/* sheet tabs */
.tabstrip {
  height: 52px;
  flex: none;
  display: flex;
  align-items: flex-start;
  padding-left: 29px;
  background: #f0f0f0;
  border-top: 2px solid #c8c8c8;
}
.ic-tri { width: 16px; height: 21px; margin-top: 14px; }
.sheet-tab {
  width: 158px;
  height: 45px;
  margin-top: -2px;
  margin-left: 30px;
  background: #fff;
  border-radius: 0 0 6px 6px;
  box-shadow: 0 2px 0 #bdbdbd;
  text-align: center;
  line-height: 48px;
  font-size: 25.500px;
  color: #22875a;
}
.ic-plus { width: 20px; height: 20px; margin: 13px 0 0 29px; }
.tsep { width: 2px; height: 42px; background: #d6d6d6; margin-left: 27px; }

/* status bar */
.status {
  height: 46px;
  flex: none;
  display: flex;
  align-items: center;
  padding-right: 49px;
  background: linear-gradient(#e6e6e6, #d8d8d8);
  border-top: 2px solid #a8a8a8;
  font-size: 24.500px;
  color: #555;
}
.status span { padding-bottom: 3px; }
.pl48 { margin-left: 48px; }
.stat-first { margin-left: auto; }
.ic-macro { width: 32px; height: 28px; }
.ic-access { width: 30px; height: 30px; }
.view-on { width: 74px; height: 44px; background: #a8a8a8; display: flex; align-items: center; justify-content: center; }
.ic-view { width: 26px; height: 26px; }
.ic-layout { width: 28px; height: 26px; }
.ic-break { width: 29px; height: 26px; }
.zoom-minus { width: 16px; height: 6px; background: #6d6d6d; }
.slider { position: relative; width: 200px; height: 8px; border-radius: 4px; background: #9a9a9a; }
.thumb {
  position: absolute;
  left: 84px;
  top: -12px;
  width: 32px;
  height: 32px;
  border-radius: 50%;
  background: #fff;
  box-shadow: 0 1px 2px rgba(0, 0, 0, .3);
}
.ic-zplus { width: 18px; height: 18px; }

/* dialog */
.dialog {
  position: absolute;
  left: 839px;
  top: 329px;
  width: 1011px;
  height: 483px;
  border-radius: 22px;
  background: #ebebeb;
  border: 1px solid #d2d2d2;
  box-shadow: 0 30px 56px -8px rgba(0, 0, 0, .5);
  color: #333;
  font-size: 26.400px;
}
.dialog-title {
  height: 58px;
  line-height: 53px;
  text-align: center;
  font-weight: 700;
  color: #444;
  background: #f0f1f1;
  border-bottom: 2px solid #d0d0d0;
  border-radius: 21px 21px 0 0;
}
.dialog-body { padding: 39px 39px 0 40px; }
.d-row { display: flex; align-items: center; height: 40px; }
.d-row-tall { height: 45px; }
.lbl { flex: none; line-height: 34px; padding-bottom: 4px; }
.w77 { width: 77px; }
.w130 { width: 130px; }
.w299 { width: 299px; }
.w373 { width: 373px; }
.w467 { width: 467px; }
.w779 { width: 779px; }
.select {
  height: 40px;
  display: flex;
  align-items: center;
  justify-content: space-between;
  padding: 0 3px 0 16px;
  background: #fff;
  border-radius: 10px;
  box-shadow: 0 1px 2px rgba(0, 0, 0, .35);
  color: #333;
}
.opt { line-height: 32px; padding-bottom: 5px; }
.stepper { width: 32px; height: 32px; border-radius: 8px; background: linear-gradient(#23875c, #14724a); }
.step { width: 32px; height: 32px; }
.d-rule { margin: 30px 0 29px; height: 2px; border: 0; background: #d4d4d4; }
.preview {
  width: 316px;
  height: 45px;
  margin-left: 17px;
  display: flex;
  align-items: center;
  justify-content: center;
  gap: 10px;
  padding-bottom: 4px;
  background: #ffc7ce;
  color: #9c0006;
}
.pv-zh { font-size: 28px; }
.pv-en { font-size: 24px; }
.d-actions { display: flex; justify-content: flex-end; gap: 24px; margin-top: 41px; }
.btn {
  width: 94px;
  height: 40px;
  padding: 0 0 4px;
  border: 0;
  border-radius: 10px;
  background: #fff;
  box-shadow: 0 1px 2px rgba(0, 0, 0, .35);
  font-family: inherit;
  font-size: 26.400px;
  color: #333;
}
.btn.primary { background: linear-gradient(#2c8d62, #14724a); color: #fff; font-weight: 700; }

/* annotations */
.callout-box {
  position: absolute;
  left: 1710px;
  top: 708px;
  width: 129px;
  height: 83px;
  border: 4px solid #ed1c24;
}
.callout-arrow { position: absolute; left: 1775px; top: 800px; width: 55px; height: 180px; }
.callout-text {
  position: absolute;
  left: 1256px;
  top: 1034px;
  font-size: 89px;
  font-weight: 400;
  line-height: 130px;
  color: #ed1c24;
  text-shadow:
    2px 0 1px #fff, -2px 0 1px #fff, 0 2px 1px #fff, 0 -2px 1px #fff,
    2px 2px 2px #fff, -2px -2px 2px #fff, 2px -2px 2px #fff, -2px 2px 2px #fff,
    1px 2px 9px rgba(0, 0, 0, .6);
}
```
